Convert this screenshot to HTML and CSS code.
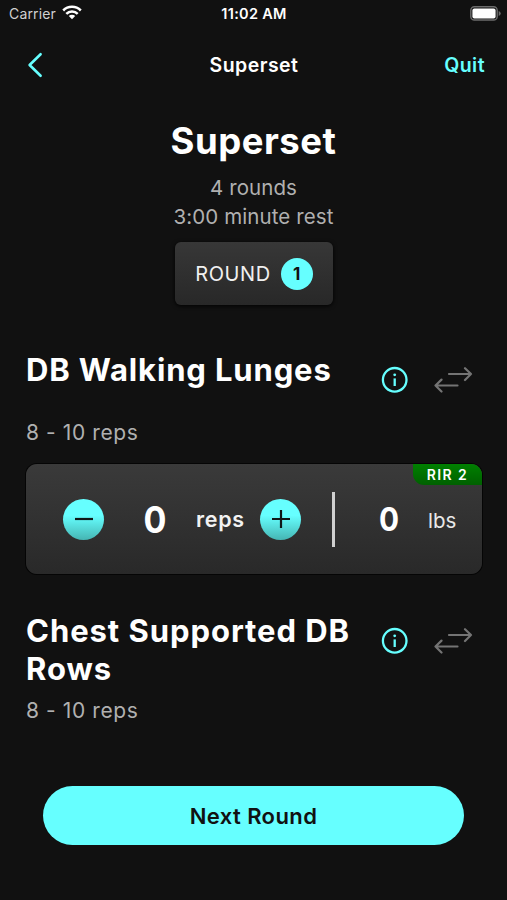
FILE: index.html
```html
<!DOCTYPE html>
<html lang="en">
<head>
<meta charset="utf-8">
<meta name="viewport" content="width=device-width, initial-scale=1">
<title>Superset</title>
<link rel="stylesheet" href="styles.css">
</head>
<body>
<div class="status">
  <div class="carrier"><span>Carrier</span>
    <svg class="wifi" width="20" height="15" viewBox="0 0 20 15" fill="none" stroke="#fff" stroke-width="2.5"><path d="M1.2 5.5a12.4 12.4 0 0 1 17.6 0"/><path d="M4.3 8.8a8 8 0 0 1 11.4 0"/><path d="M10 14.2L6.8 11a4.5 4.5 0 0 1 6.4 0z" fill="#fff" stroke="none"/></svg>
  </div>
  <div class="time">11:02 AM</div>
  <svg class="battery" width="31" height="15" viewBox="0 0 31 15"><rect x=".8" y=".8" width="26.4" height="13.2" rx="3.6" fill="none" stroke="#6c6c6c" stroke-width="1.4"/><rect x="2.4" y="2.4" width="23.2" height="10" rx="2" fill="#fff"/><path d="M28.7 5v5q2-.8 2-2.5T28.7 5z" fill="#6c6c6c"/></svg>
</div>
<header class="nav">
  <svg class="back" width="16" height="26" viewBox="0 0 16 26" fill="none" stroke="#6ff" stroke-width="2.6" stroke-linecap="round" stroke-linejoin="round"><path d="M13.6 2.2L2.6 13l11 10.8"/></svg>
  <div class="nav-title">Superset</div>
  <div class="quit">Quit</div>
</header>
<section class="summary">
  <h1>Superset</h1>
  <p class="rounds">4 rounds</p>
  <p class="rest">3:00 minute rest</p>
  <div class="round"><span class="round-label">ROUND</span><span class="round-num">1</span></div>
</section>
<main>
  <section class="exercise first">
    <div class="head">
      <h2>DB Walking Lunges</h2>
      <svg class="info" width="28" height="28" viewBox="0 0 28 28" fill="none" stroke="#6ff"><circle cx="13.7" cy="13.8" r="11.8" stroke-width="2.3"/><path d="M13.7 12.4v7.6" stroke-width="2.3"/><circle cx="13.7" cy="8.8" r="1.4" fill="#6ff" stroke="none"/></svg>
      <svg class="swap" width="40" height="28" viewBox="0 0 40 28" fill="none" stroke="#747474" stroke-width="2.2" stroke-linecap="round" stroke-linejoin="round"><path d="M15 8h22M31 2.2L37 8l-6 6M23.5 19.5H1.5M7.5 13.6l-6 5.9 6 6"/></svg>
    </div>
    <p class="reps">8 - 10 reps</p>
  </section>
  <div class="card">
    <span class="rir">RIR 2</span>
    <span class="step"><svg width="20" height="20" viewBox="0 0 20 20"><path d="M1 10h18" stroke="#101818" stroke-width="2.2"/></svg></span>
    <span class="count">0</span>
    <span class="unit">reps</span>
    <span class="step"><svg width="20" height="20" viewBox="0 0 20 20"><path d="M1 10h18M10 1v18" stroke="#101818" stroke-width="2.2"/></svg></span>
    <span class="divider"></span>
    <span class="weight">0</span>
    <span class="lbs">lbs</span>
  </div>
  <section class="exercise">
    <div class="head">
      <h2>Chest Supported DB<br>Rows</h2>
      <svg class="info" width="28" height="28" viewBox="0 0 28 28" fill="none" stroke="#6ff"><circle cx="13.7" cy="13.8" r="11.8" stroke-width="2.3"/><path d="M13.7 12.4v7.6" stroke-width="2.3"/><circle cx="13.7" cy="8.8" r="1.4" fill="#6ff" stroke="none"/></svg>
      <svg class="swap" width="40" height="28" viewBox="0 0 40 28" fill="none" stroke="#747474" stroke-width="2.2" stroke-linecap="round" stroke-linejoin="round"><path d="M15 8h22M31 2.2L37 8l-6 6M23.5 19.5H1.5M7.5 13.6l-6 5.9 6 6"/></svg>
    </div>
    <p class="reps">8 - 10 reps</p>
  </section>
</main>
<button class="next">Next Round</button>
</body>
</html>
```
FILE: styles.css
```css
* { box-sizing: border-box; margin: 0; }
body {
  height: 900px;
  overflow: hidden;
  background: #111;
  color: #fff;
  font-family: Inter, "Liberation Sans", sans-serif;
}
svg { display: block; flex: none; }
.status {
  height: 28px;
  padding: 0 6px 0 9px;
  display: grid;
  grid-template-columns: 1fr auto 1fr;
  align-items: center;
  font-size: 14px;
  line-height: 28px;
}
.carrier { display: flex; align-items: center; gap: 6px; color: #d0d0d0; letter-spacing: .15px; }
.wifi { margin-top: -3px; }
.time { margin-left: -2px; font-size: 14.5px; font-weight: 600; letter-spacing: .3px; }
.battery { justify-self: end; margin-top: -2px; }
.nav {
  height: 73px;
  padding: 0 22px 0 27px;
  display: grid;
  grid-template-columns: 1fr auto 1fr;
  align-items: center;
  font-size: 19.5px;
  font-weight: 600;
  letter-spacing: .45px;
}
.nav-title { margin-left: -4px; padding-top: 1px; }
.quit { justify-self: end; padding-top: 1px; color: #6ff; }
.summary { padding-top: 16px; display: flex; flex-direction: column; align-items: center; }
h1 { font-size: 36.5px; line-height: 48px; font-weight: 700; letter-spacing: .5px; }
.rounds, .rest, .reps { font-size: 20.5px; line-height: 29px; color: #b0b0b0; letter-spacing: .1px; }
.rounds { margin-top: 8px; }
.round {
  width: 158px;
  height: 63px;
  margin-top: 11px;
  padding-left: 1px;
  display: flex;
  align-items: center;
  justify-content: center;
  gap: 10px;
  border-radius: 6px;
  background: linear-gradient(#373737, #282828);
  box-shadow: 0 1px 4px #000;
}
.round-label { font-size: 20px; letter-spacing: .6px; color: #f0f0f0; }
.round-num {
  width: 32px;
  height: 32px;
  border-radius: 50%;
  background: #6ff;
  color: #111;
  font-size: 17px;
  line-height: 32px;
  font-weight: 700;
  text-align: center;
}
main { padding: 46px 25px 0 26px; }
.head { display: flex; align-items: flex-start; min-height: 66px; }
h2 { width: 355px; font-size: 31px; line-height: 38px; font-weight: 700; letter-spacing: .95px; white-space: nowrap; }
.first h2 { letter-spacing: .85px; }
.info { margin-top: 15px; }
.swap { margin: 15px 0 0 25px; }
.exercise .reps { margin-top: 8px; font-size: 21px; letter-spacing: .6px; }
.exercise.first .reps { margin-top: 1px; }
.card {
  position: relative;
  height: 110px;
  margin: 17px 0 38px;
  padding-left: 37px;
  display: flex;
  align-items: center;
  border-radius: 11px;
  background: linear-gradient(#3a3a3a, #292929);
  box-shadow: 0 0 0 1px #050505;
}
.rir {
  position: absolute;
  top: 0;
  right: 0;
  width: 69px;
  height: 21px;
  border-radius: 0 11px 0 11px;
  background: linear-gradient(#008000, #006000);
  font-size: 14px;
  line-height: 22px;
  font-weight: 600;
  letter-spacing: 1.4px;
  text-align: center;
}
.step {
  width: 41px;
  height: 41px;
  display: grid;
  place-items: center;
  border-radius: 50%;
  background: linear-gradient(#6ff 40%, #45b5b3);
}
.count { width: 102px; font-size: 37px; font-weight: 700; text-align: center; transform: scaleX(.92); }
.unit { width: 54px; margin-left: -10px; margin-right: 10px; font-size: 21.5px; font-weight: 600; letter-spacing: .7px; color: #f2f2f2; }
.divider { width: 3px; height: 55px; margin-left: 31px; background: #d0d0d0; }
.weight { width: 66px; margin-left: 21px; font-size: 33px; font-weight: 700; text-align: center; transform: scaleX(.9); }
.lbs { margin-left: 6px; padding-top: 2px; font-size: 20.5px; color: #e8e8e8; }
.next {
  display: block;
  width: 421px;
  height: 59px;
  margin: 61px 0 0 43px;
  border: 0;
  border-radius: 30px;
  background: #6ff;
  color: #111;
  font: 600 22px Inter, "Liberation Sans", sans-serif;
  letter-spacing: .4px;
}
```
